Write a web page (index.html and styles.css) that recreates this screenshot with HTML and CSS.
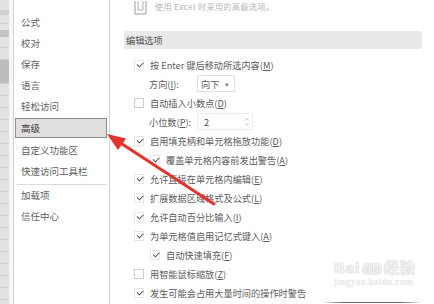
FILE: index.html
```html
<!DOCTYPE html>
<html lang="zh-CN">
<head>
	<meta charset="UTF-8">
	<meta name="viewport" content="width=device-width, initial-scale=1.0">
	<title>Excel 选项 - 高级</title>
	<link rel="stylesheet" href="styles.css">
</head>
<body>

	<div class="window">
		<div class="strip"></div>

		<nav class="nav">
			<div class="nav-item">公式</div>
			<div class="nav-item">校对</div>
			<div class="nav-item">保存</div>
			<div class="nav-item">语言</div>
			<div class="nav-item">轻松访问</div>
			<div class="nav-item active">高级</div>
			<div class="nav-item">自定义功能区</div>
			<div class="nav-item">快速访问工具栏</div>
			<div class="nav-sep"></div>
			<div class="nav-item">加载项</div>
			<div class="nav-item">信任中心</div>
		</nav>

		<main class="main">
			<div class="intro">
				<svg class="intro-icon" width="13" height="14" viewBox="0 0 13 14">
					<path d="M1 0 V13 H12 V0" fill="none" stroke="#9a9a9a" stroke-width="1"/>
					<path d="M4 0 V9 H9 V0" fill="none" stroke="#b0b0b0" stroke-width="1"/>
				</svg>
				<span>使用 Excel 时采用的高级选项。</span>
			</div>

			<div class="section-title">编辑选项</div>

			<div class="opt"><span class="cb checked"></span>按 Enter 键后移动所选内容(<u>M</u>)</div>
			<div class="opt sub-field">
				<span class="field-label">方向(<u>I</u>):</span>
				<span class="select">向下 <span class="caret">▾</span></span>
			</div>
			<div class="opt"><span class="cb"></span>自动插入小数点(<u>D</u>)</div>
			<div class="opt sub-field">
				<span class="field-label">小位数(<u>P</u>):</span>
				<span class="spinner">2
					<svg class="spin-arrows" width="6" height="10" viewBox="0 0 6 10">
						<path d="M1 3.5 L3 1.5 L5 3.5" fill="none" stroke="#b8b8b8" stroke-width="0.9"/>
						<path d="M1 6.5 L3 8.5 L5 6.5" fill="none" stroke="#b8b8b8" stroke-width="0.9"/>
					</svg>
				</span>
			</div>
			<div class="opt"><span class="cb checked"></span>启用填充柄和单元格拖放功能(<u>D</u>)</div>
			<div class="opt indent"><span class="cb checked"></span>覆盖单元格内容前发出警告(<u>A</u>)</div>
			<div class="opt"><span class="cb checked"></span>允许直接在单元格内编辑(<u>E</u>)</div>
			<div class="opt"><span class="cb checked"></span>扩展数据区域格式及公式(<u>L</u>)</div>
			<div class="opt"><span class="cb checked"></span>允许自动百分比输入(<u>I</u>)</div>
			<div class="opt"><span class="cb checked"></span>为单元格值启用记忆式键入(<u>A</u>)</div>
			<div class="opt indent"><span class="cb checked"></span>自动快速填充(<u>F</u>)</div>
			<div class="opt"><span class="cb"></span>用智能鼠标缩放(<u>Z</u>)</div>
			<div class="opt"><span class="cb checked"></span>发生可能会占用大量时间的操作时警告</div>
		</main>
	</div>

	<!-- flèche rouge d'annotation -->
	<svg class="arrow" width="434" height="304" viewBox="0 0 434 304">
		<line x1="214" y1="204" x2="119" y2="142" stroke="#e8312b" stroke-width="3" stroke-linecap="round"/>
		<polygon points="107,134 126,138.5 118,150" fill="#e8312b"/>
	</svg>

	<div class="watermark">
		<div class="wm-logo">Bai<span class="wm-du">du</span>经验</div>
		<div class="wm-url">jingyan.baidu.com</div>
	</div>
	<div class="bottom-line"></div>

</body>
</html>
```

FILE: styles.css
```css
html, body {
	margin: 0;
	padding: 0;
	width: 434px;
	height: 304px;
	overflow: hidden;
	background: #ffffff;
	font-family: "Noto Sans CJK SC", "Noto Sans", sans-serif;
	color: #5c5c5c;
}

.window {
	display: flex;
	height: 304px;
}

/* bande de la feuille en arrière-plan */
.strip {
	width: 9px;
	flex-shrink: 0;
	border-right: 4px solid #f7f7f7;
	background:
		linear-gradient(to bottom, transparent 0, transparent 10px, #cfcfcf 10px, #cfcfcf 15px, transparent 15px, transparent 30px, #c4c4c4 30px, #c4c4c4 37px, transparent 37px, transparent 60px, #bcbcbc 60px, #bcbcbc 83px, transparent 83px),
		repeating-linear-gradient(to bottom, #e2e2e2 0, #e2e2e2 11px, #cdcdcd 11px, #cdcdcd 12px);
}

.nav {
	width: 95px;
	flex-shrink: 0;
	border-left: 1px solid #d4d4d4;
	border-right: 1px solid #d0d0d0;
	padding-top: 12px;
	font-size: 9.5px;
	color: #606060;
}

.nav-item {
	height: 21px;
	line-height: 21px;
	padding-left: 7px;
	white-space: nowrap;
}

.nav-item.active {
	height: 18px;
	line-height: 18px;
	margin: 1px 2px 2px 1px;
	padding-left: 5px;
	background: #e1dfde;
	border: 1px solid #8c8c8c;
	color: #3a3a3a;
}

.nav-sep {
	height: 1px;
	margin: 2px 2px 0 2px;
	background: #dcdcdc;
}

.main {
	flex: 1;
	padding: 0 12px 0 14px;
	font-size: 9.2px;
	white-space: nowrap;
}

.intro {
	display: flex;
	align-items: flex-end;
	gap: 8px;
	height: 16px;
	margin-top: -1px;
	padding-left: 10px;
	color: #b4b4b4;
	font-size: 8px;
	overflow: hidden;
}

.intro span {
	position: relative;
	top: -3px;
	letter-spacing: 0.5px;
}

.section-title {
	margin-top: 16px;
	height: 18px;
	line-height: 18px;
	padding-left: 2px;
	background: #e9e9e9;
	color: #505050;
}

.section-title + .opt {
	margin-top: 6px;
}

.opt {
	display: flex;
	align-items: center;
	height: 19px;
	padding-left: 10px;
}

.opt.indent {
	padding-left: 26px;
}

.opt.sub-field {
	padding-left: 25px;
}

u {
	text-decoration-thickness: 1px;
	text-underline-offset: 1px;
}

.cb {
	position: relative;
	width: 8px;
	height: 8px;
	margin-right: 6px;
	border: 1px solid #cdcdcd;
	background: #fff;
	flex-shrink: 0;
}

.cb.checked {
	border-color: #e6e6e6;
}

.cb.checked::after {
	content: "";
	position: absolute;
	left: 1.5px;
	top: 1px;
	width: 5px;
	height: 2.5px;
	border-left: 1.3px solid #5a5a5a;
	border-bottom: 1.3px solid #5a5a5a;
	transform: rotate(-45deg);
}

.field-label {
	width: 48px;
}

.select {
	display: flex;
	align-items: center;
	gap: 6px;
	height: 15px;
	padding: 0 5px 0 3px;
	border: 1px solid #e0e0e0;
}

.caret {
	font-size: 7px;
	color: #777;
}

.spinner {
	display: flex;
	align-items: center;
	justify-content: space-between;
	width: 46px;
	height: 15px;
	padding: 0 2px 0 6px;
	border: 1px solid #ededed;
	color: #4a4a4a;
}

.arrow {
	position: absolute;
	left: 0;
	top: 0;
	pointer-events: none;
}

.watermark {
	position: absolute;
	left: 320px;
	top: 248px;
	width: 100px;
	padding: 8px 6px 6px 14px;
	background: radial-gradient(ellipse at center, rgba(255,255,255,0.9) 40%, rgba(255,255,255,0) 75%);
	pointer-events: none;
}

.wm-logo {
	font-family: "Liberation Sans", Arial, sans-serif;
	font-size: 15px;
	font-weight: bold;
	color: #f4f4f4;
	text-shadow: 0 0 1px #c8c8c8, 0 0 1px #c8c8c8;
	letter-spacing: 1px;
}

.wm-logo .wm-du {
	display: inline-block;
	margin: 0 2px;
	padding: 0 2px;
	border-radius: 6px;
	font-size: 11px;
	background: #f0f0f0;
	box-shadow: 0 0 1px #c8c8c8;
}

.wm-url {
	font-family: "Liberation Serif", serif;
	font-size: 9.5px;
	color: #ededed;
	text-shadow: 0 0 1px #cfcfcf;
	letter-spacing: 0.5px;
}

.bottom-line {
	position: absolute;
	left: 322px;
	top: 302px;
	width: 100px;
	height: 1px;
	background: linear-gradient(to right, rgba(90,90,90,0), #6a6a6a 20%, #6a6a6a 80%, rgba(90,90,90,0));
}
```
